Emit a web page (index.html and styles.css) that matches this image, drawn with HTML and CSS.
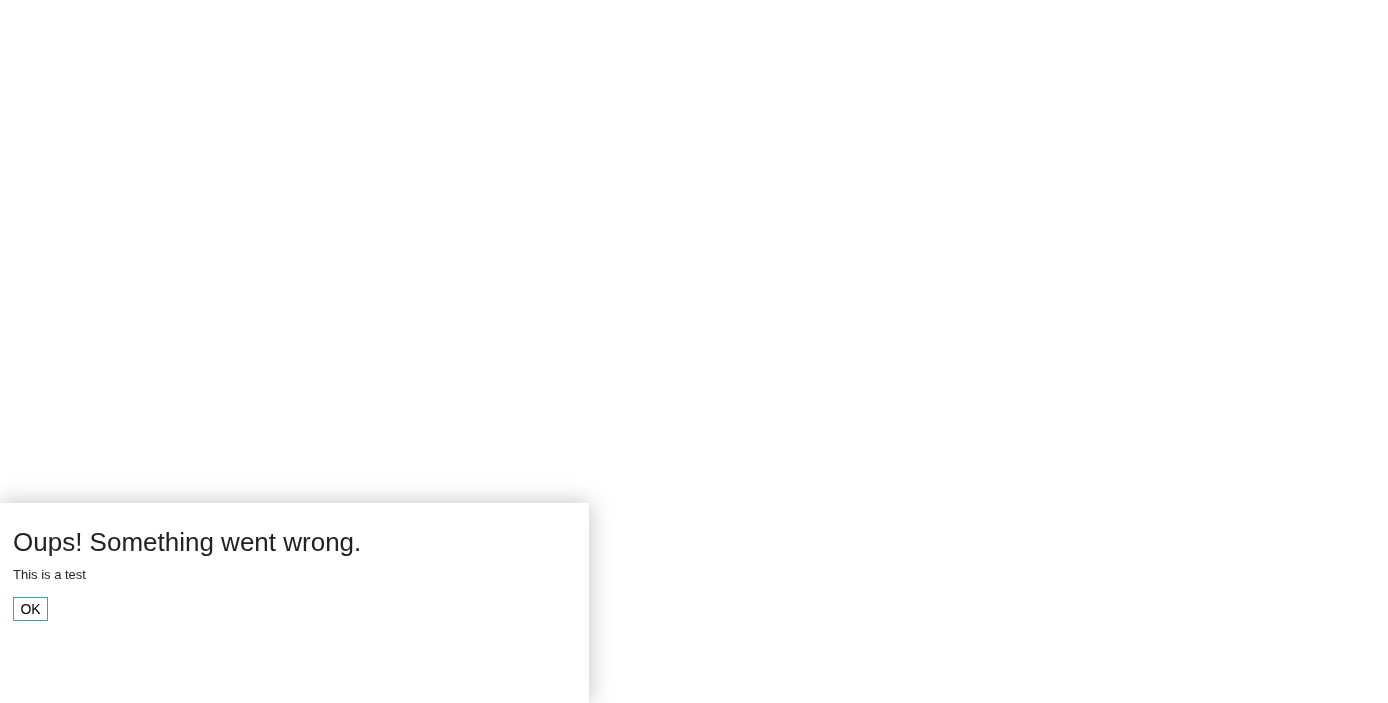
FILE: index.html
```html
<!DOCTYPE html>
<html lang="en">
<head>
    <meta charset="UTF-8">
    <meta name="viewport" content="width=device-width, initial-scale=1.0">
    <title>Error</title>
    <link rel="stylesheet" href="styles.css">
</head>
<body>

    <div class="error-dialog">
        <h2 class="error-title">Oups! Something went wrong.</h2>
        <p class="error-message">This is a test</p>
        <button class="error-btn">OK</button>
    </div>

</body>
</html>
```

FILE: styles.css
```css
body {
    font-family: "Liberation Sans", Arial, sans-serif;
    margin: 0;
    padding: 0;
    background: #ffffff;
    color: #222222;
}

/* Error Dialog */
.error-dialog {
    position: fixed;
    left: 0;
    bottom: 0;
    width: 589px;
    height: 200px;
    box-sizing: border-box;
    padding: 22px 13px;
    background: #ffffff;
    box-shadow: 0 0 22px rgba(0, 0, 0, 0.25);
}

.error-title {
    margin: 0;
    font-size: 26px;
    font-weight: normal;
    line-height: 34px;
    color: #222222;
}

.error-message {
    margin: 8px 0 14px;
    font-size: 13px;
    line-height: 16px;
    color: #2a2226;
}

.error-btn {
    font-family: "Liberation Sans", Arial, sans-serif;
    font-size: 14px;
    color: #000000;
    background: #ffffff;
    border: 1px solid #2aaab8;
    border-radius: 0;
    width: 35px;
    height: 24px;
    padding: 0;
    cursor: pointer;
}
```
